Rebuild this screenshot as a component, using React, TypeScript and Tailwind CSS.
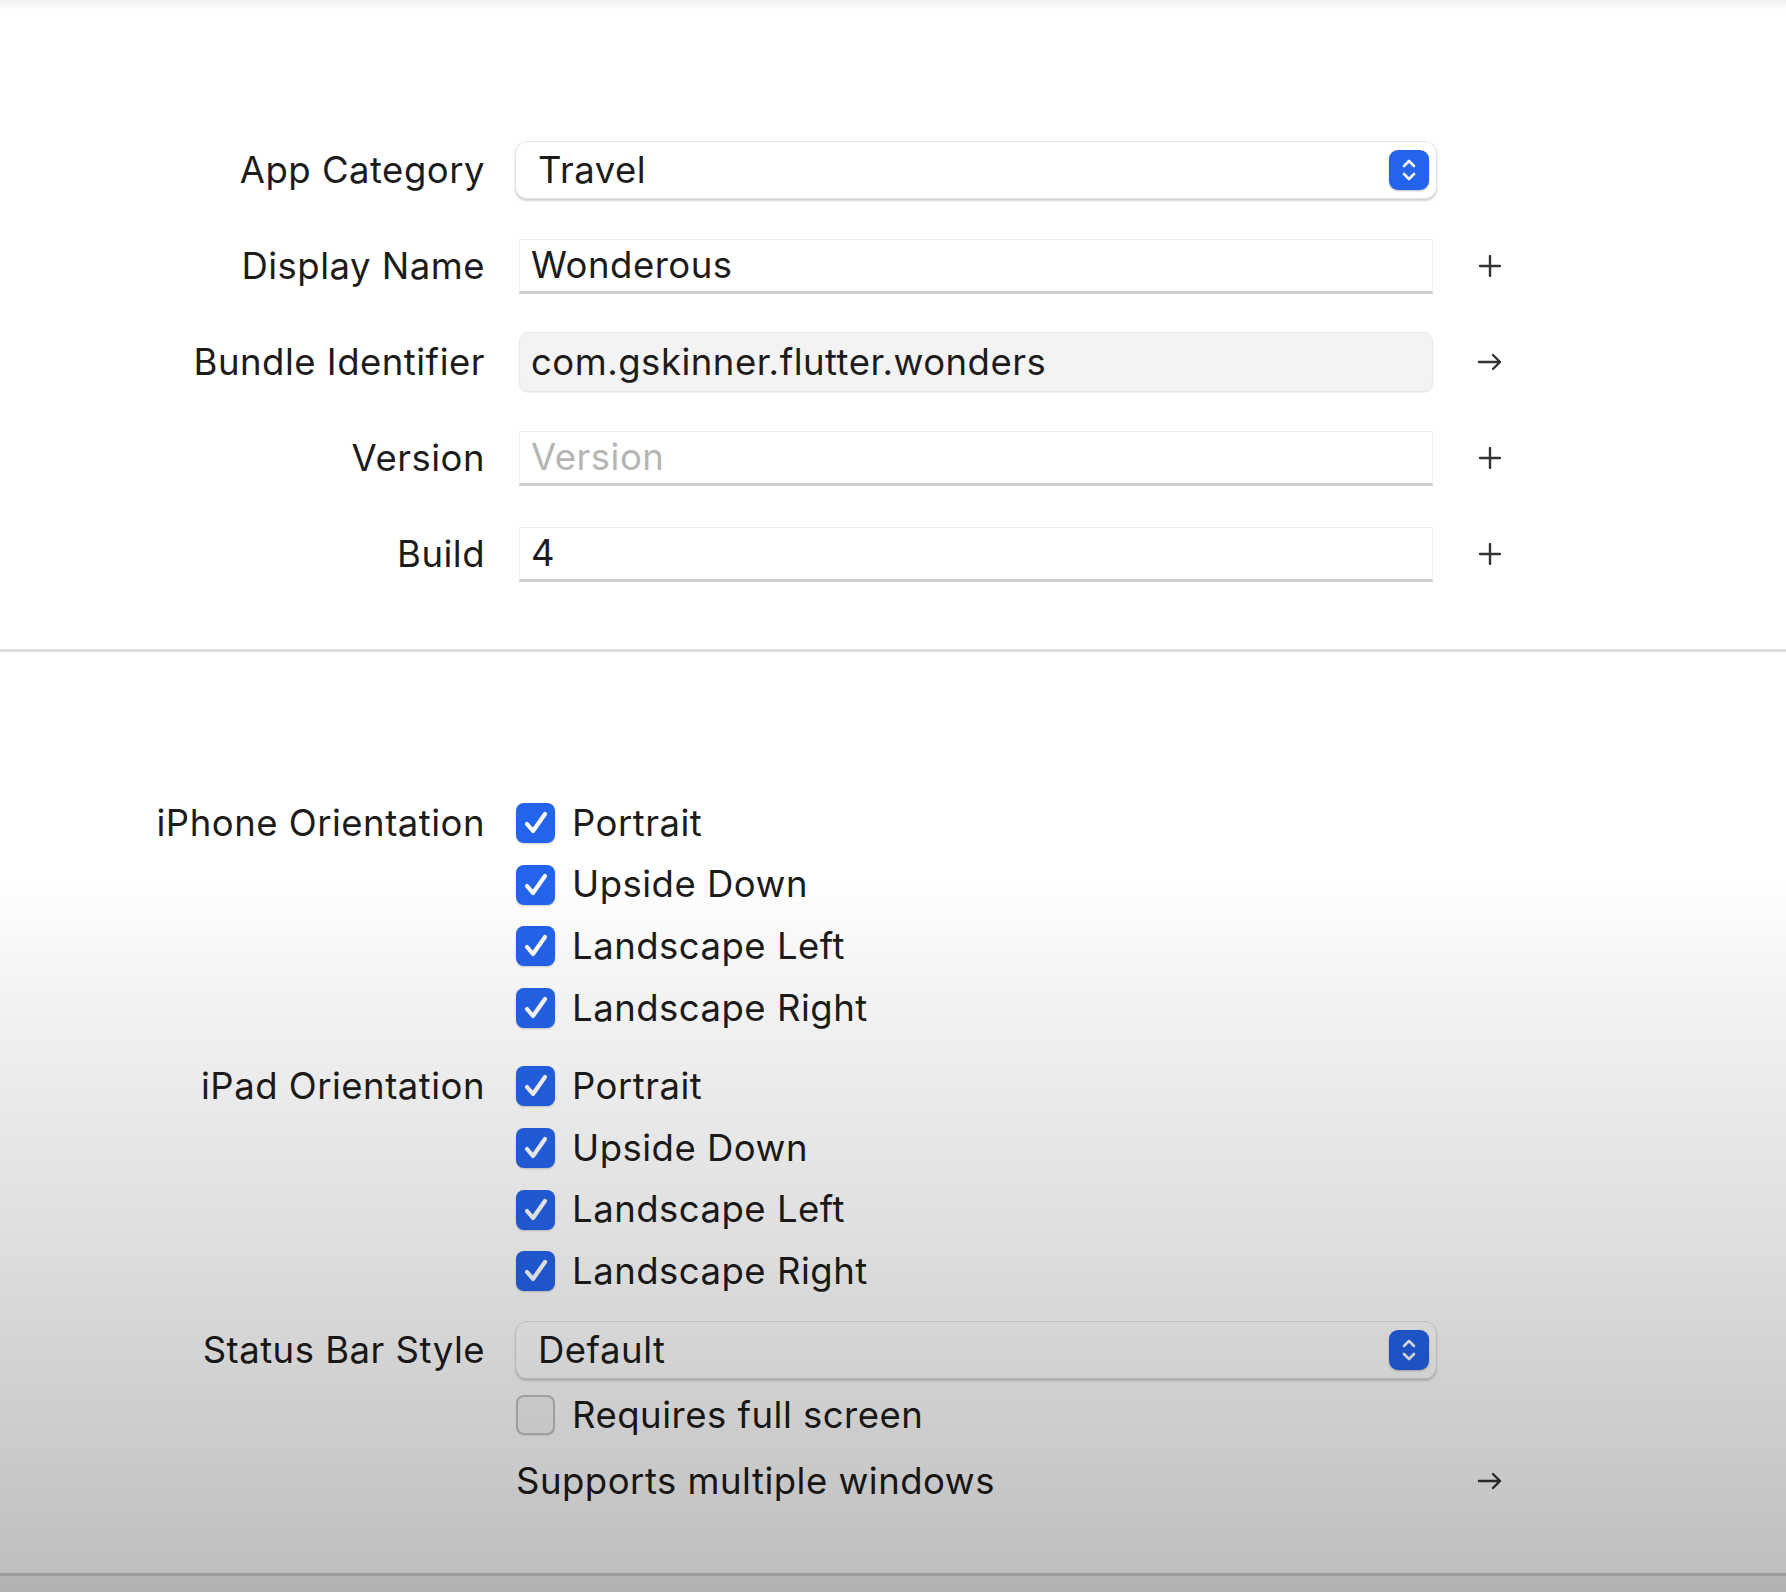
import React from "react";

const font = { fontFamily: "Inter, 'Noto Sans', 'Liberation Sans', sans-serif" };

function Stepper() {
  return (
    <div className="w-[40px] h-[40px] rounded-[9px] bg-[#2463eb] flex items-center justify-center shadow-[0_1px_2px_rgba(0,0,0,0.25)]">
      <svg width="20" height="28" viewBox="0 0 20 28" fill="none" stroke="white" strokeWidth="2.6" strokeLinecap="round" strokeLinejoin="round">
        <path d="M5 10 L10 5 L15 10" />
        <path d="M5 18 L10 23 L15 18" />
      </svg>
    </div>
  );
}

function Plus() {
  return (
    <svg width="22" height="22" viewBox="0 0 22 22" stroke="#333" strokeWidth="2.4" strokeLinecap="round">
      <path d="M11 1 V21 M1 11 H21" />
    </svg>
  );
}

function Arrow() {
  return (
    <svg width="26" height="18" viewBox="0 0 26 18" fill="none" stroke="#333" strokeWidth="2.4" strokeLinecap="round" strokeLinejoin="round">
      <path d="M2 9 H23 M16 2 L23 9 L16 16" />
    </svg>
  );
}

function Check({ checked }: { checked: boolean }) {
  if (!checked) {
    return (
      <div className="w-[39px] h-[40px] rounded-[8px] border-2 border-[#c4c4c4] bg-[#f7f7f7] shadow-[0_1px_1px_rgba(0,0,0,0.08)]" />
    );
  }
  return (
    <div className="w-[39px] h-[40px] rounded-[8px] bg-[#2463eb] flex items-center justify-center shadow-[0_1px_2px_rgba(0,0,0,0.2)]">
      <svg width="28" height="26" viewBox="0 0 28 26" fill="none" stroke="white" strokeWidth="4.2" strokeLinecap="round" strokeLinejoin="round">
        <path d="M5 14 L11 21 L23 4" />
      </svg>
    </div>
  );
}

const txt = "text-[36.5px] tracking-[0.5px] text-[#1c1c1c]";

function Label({ children }: { children: React.ReactNode }) {
  return <div className={"w-[485px] shrink-0 text-right whitespace-nowrap " + txt}>{children}</div>;
}

function FieldRow({
  label,
  children,
  icon,
}: {
  label: string;
  children: React.ReactNode;
  icon?: React.ReactNode;
}) {
  return (
    <div className="flex items-center h-[56px]">
      <Label>{label}</Label>
      <div className="ml-[30px] w-[922px] shrink-0 h-full flex items-center">{children}</div>
      <div className="w-[106px] flex items-center justify-center">{icon}</div>
    </div>
  );
}

function Popup({ value }: { value: string }) {
  return (
    <div className="w-full h-[58px] rounded-[12px] bg-white border border-[#e2e2e2] shadow-[0_2px_2px_rgba(0,0,0,0.18)] flex items-center pl-[22px] pr-[7px]">
      <span className={"flex-1 " + txt}>{value}</span>
      <Stepper />
    </div>
  );
}

function TextField({ value, placeholder, gray }: { value?: string; placeholder?: string; gray?: boolean }) {
  return (
    <div
      className={
        gray
          ? "ml-[4px] w-[914px] h-[60px] rounded-[9px] bg-[#f3f3f3] border border-[#e6e6e6] shadow-[0_1px_1px_rgba(0,0,0,0.06)] flex items-center pl-[11px]"
          : "ml-[4px] w-[914px] h-[55px] bg-white border border-[#ececec] border-b-[3px] border-b-[#cfcfcf] flex items-center pl-[11px]"
      }
    >
      {value ? (
        <span className={txt}>{value}</span>
      ) : (
        <span className="text-[36.5px] tracking-[0.5px] text-[#b5b5b5]">{placeholder}</span>
      )}
    </div>
  );
}

function CheckRow({ label, checked = true }: { label: string; checked?: boolean }) {
  return (
    <div className="flex items-center h-[61.8px] gap-[17px] pl-[1px]">
      <Check checked={checked} />
      <span className={txt}>{label}</span>
    </div>
  );
}

function OrientationGroup({ label }: { label: string }) {
  return (
    <div className="flex items-start">
      <div className="h-[61.8px] flex items-center">
        <Label>{label}</Label>
      </div>
      <div className="ml-[30px] flex flex-col">
        <CheckRow label="Portrait" />
        <CheckRow label="Upside Down" />
        <CheckRow label="Landscape Left" />
        <CheckRow label="Landscape Right" />
      </div>
    </div>
  );
}

export default function App() {
  return (
    <div className="relative w-[1786px] h-[1592px] overflow-hidden bg-white" style={font}>
      <div className="h-[10px] bg-gradient-to-b from-[#efefef] to-white" />
      {/* Section 1 */}
      <div className="flex flex-col gap-[40px] pt-[132px]">
        <FieldRow label="App Category">
          <Popup value="Travel" />
        </FieldRow>
        <FieldRow label="Display Name" icon={<Plus />}>
          <TextField value="Wonderous" />
        </FieldRow>
        <FieldRow label="Bundle Identifier" icon={<Arrow />}>
          <TextField value="com.gskinner.flutter.wonders" gray />
        </FieldRow>
        <FieldRow label="Version" icon={<Plus />}>
          <TextField placeholder="Version" />
        </FieldRow>
        <FieldRow label="Build" icon={<Plus />}>
          <TextField value="4" />
        </FieldRow>
      </div>

      <div className="mt-[67px] h-[3px] bg-[#dedede]" />

      {/* Section 2 */}
      <div className="flex flex-col pt-[140px]">
        <OrientationGroup label="iPhone Orientation" />
        <div className="h-[16px]" />
        <OrientationGroup label="iPad Orientation" />
        <div className="h-[20px]" />
        <FieldRow label="Status Bar Style">
          <Popup value="Default" />
        </FieldRow>
        <div className="flex items-center h-[62px] mt-[6px]">
          <div className="w-[485px] shrink-0" />
          <div className="ml-[30px]">
            <CheckRow label="Requires full screen" checked={false} />
          </div>
        </div>
        <div className="flex items-center h-[62px] mt-[4px]">
          <div className="w-[485px] shrink-0" />
          <div className={"ml-[31px] w-[921px] " + txt}>Supports multiple windows</div>
          <div className="w-[106px] flex items-center justify-center">
            <Arrow />
          </div>
        </div>
      </div>

      {/* bottom separator */}
      <div className="absolute left-0 right-0 top-[1573px] h-[3px] bg-[#d0d0d0]" />
      <div className="absolute left-0 right-0 top-[1576px] bottom-0 bg-[#f0f0f0]" />

      {/* video fade overlay */}
      <div className="pointer-events-none absolute inset-0 bg-[linear-gradient(to_bottom,rgba(0,0,0,0)_0%,rgba(0,0,0,0)_55%,rgba(0,0,0,0.05)_63%,rgba(0,0,0,0.13)_78%,rgba(0,0,0,0.21)_92%,rgba(0,0,0,0.26)_100%)]" />
    </div>
  );
}
